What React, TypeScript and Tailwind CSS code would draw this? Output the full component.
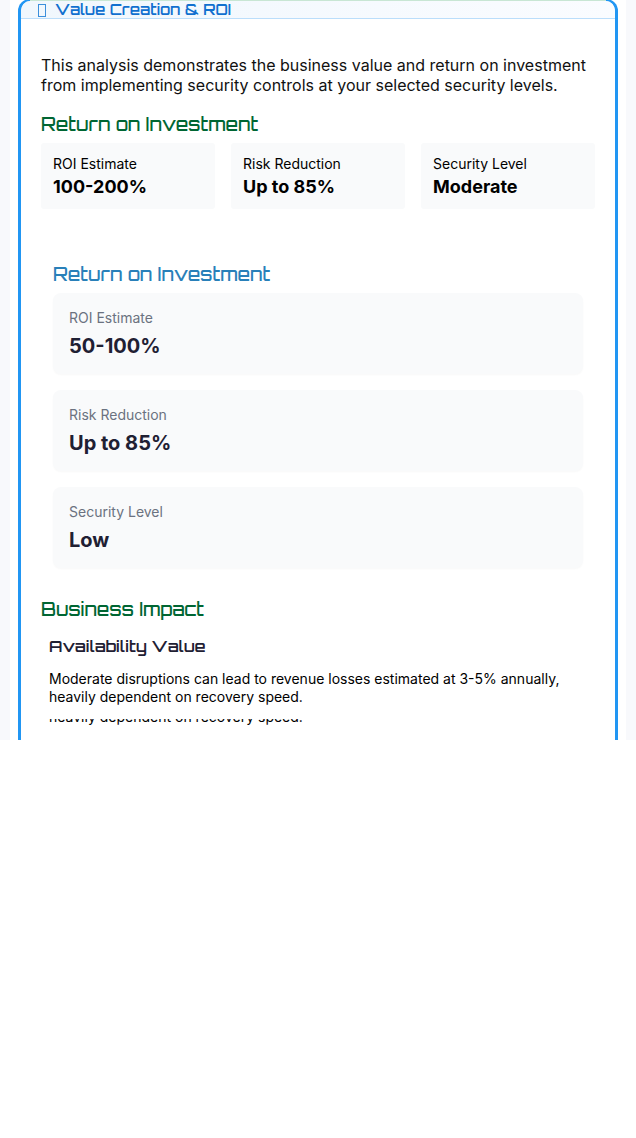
const orbit = "font-['Orbitron','DejaVu_Sans',sans-serif]";

const summary = [
  { label: "ROI Estimate", value: "100-200%" },
  { label: "Risk Reduction", value: "Up to 85%" },
  { label: "Security Level", value: "Moderate" },
];

const details = [
  { label: "ROI Estimate", value: "50-100%" },
  { label: "Risk Reduction", value: "Up to 85%" },
  { label: "Security Level", value: "Low" },
];

export default function App() {
  return (
    <div className="min-h-[1138px] bg-white font-['Inter',sans-serif]">
      <div className="h-[740px] overflow-hidden bg-[#f8f9fc] px-[10px]">
        <div className="relative h-full overflow-hidden bg-white px-2">
          <div className="-mt-px h-[760px] overflow-hidden rounded-t-xl border-x-[3px] border-t-2 border-[#2196f3]">
            <div className="flex h-[18px] items-center gap-[9px] border-b border-[#bbdefb] bg-gradient-to-r from-[#f0f7fd] to-[#fafcff] pl-[17px] pt-[2px]">
              <span className="h-[13px] w-[8px] border border-[#3b8fdc]" />
              <h2 className={`${orbit} text-[14.9px] font-semibold leading-none text-[#1170cf]`}>Value Creation &amp; ROI</h2>
            </div>
            <div className="px-[20px] pt-[36px]">
              <p className="text-[16px] leading-[20px] text-[#111]">
                This analysis demonstrates the business value and return on investment from implementing security controls at your selected security levels.
              </p>
              <h3 className={`${orbit} mt-[17px] text-[18px] font-medium leading-[24px] text-[#006633]`}>Return on Investment</h3>
              <div className="mt-[7px] grid grid-cols-3 gap-4">
                {summary.map((s) => (
                  <div key={s.label} className="h-[66px] rounded-[3px] bg-[#f9fafb] px-3 pt-[12px]">
                    <div className="text-sm leading-[18px] text-black">{s.label}</div>
                    <div className="mt-[2px] text-lg font-bold leading-[24px] text-black">{s.value}</div>
                  </div>
                ))}
              </div>
              <div className="px-3 pt-[50px]">
                <h3 className={`${orbit} text-[18px] font-medium leading-[30px] text-[#2980b9]`}>Return on Investment</h3>
                <div className="mt-[4px] flex flex-col gap-4">
                  {details.map((d) => (
                    <div key={d.label} className="h-[81px] rounded-lg bg-[#f9fafb] px-4 pt-[15px] shadow-[0_1px_2px_rgba(0,0,0,0.03)]">
                      <div className="text-sm leading-[20px] text-[#6b7280]">{d.label}</div>
                      <div className="mt-[4px] text-xl font-bold leading-[28px] text-[#1f2033]">{d.value}</div>
                    </div>
                  ))}
                </div>
              </div>
              <h3 className={`${orbit} mt-[29px] text-[18px] font-medium leading-[24px] text-[#006633]`}>Business Impact</h3>
              <div className="px-2 pt-[15px]">
                <h4 className={`${orbit} text-[16px] font-semibold leading-[20px] text-[#1f2033]`}>Availability Value</h4>
                <p className="mt-[14px] text-sm leading-[17.5px] text-black">
                  Moderate disruptions can lead to revenue losses estimated at 3-5% annually, heavily dependent on recovery speed.
                </p>
                <div className="mt-[14px] h-[7px] overflow-hidden">
                  <p className="-mt-[11px] text-sm leading-[18px] text-black">heavily dependent on recovery speed.</p>
                </div>
              </div>
            </div>
          </div>
          <div className="absolute left-[20px] right-[20px] top-0 h-px bg-[#c8e6d4]" />
        </div>
      </div>
    </div>
  );
}
